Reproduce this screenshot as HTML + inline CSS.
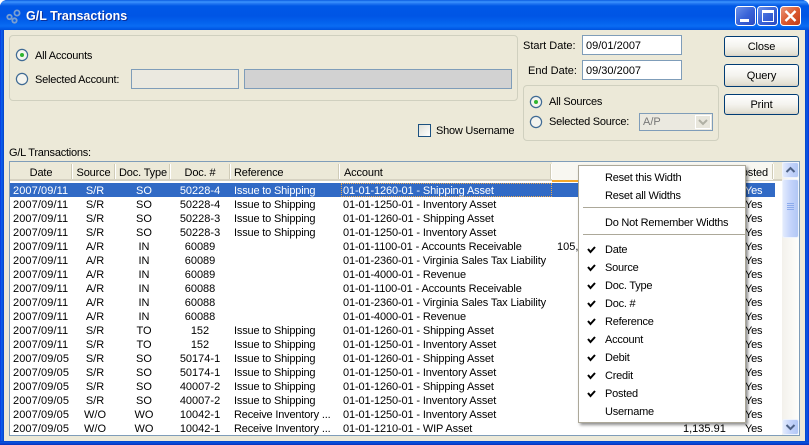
<!DOCTYPE html>
<html><head><meta charset="utf-8"><style>
html,body{margin:0;padding:0;width:809px;height:445px;overflow:hidden;background:#fff}
*{box-sizing:border-box}
body{font:11px/14px "Liberation Sans",sans-serif;color:#000;position:relative}
.a,.a *{position:absolute}
div,span{white-space:nowrap}
#win{left:0;top:0;width:809px;height:445px;background:#0831d9;border-radius:7px 7px 0 0;overflow:hidden}
#title{left:0;top:0;width:809px;height:30px;background:linear-gradient(#0a5be0 0,#3d95ff 2px,#2a7ff5 3px,#0058e6 6px,#0055e5 16px,#0464ee 23px,#0a6cf3 26px,#0058e6 29px,#0052d8 30px)}
#lb{left:0;top:30px;width:4px;height:415px;background:linear-gradient(90deg,#0831d9,#0a5ef0,#0855dd,#0440c8)}
#rb{left:805px;top:30px;width:4px;height:415px;background:linear-gradient(90deg,#0440c8,#0855dd,#0a50e0,#0831d9)}
#bb{left:0;top:441px;width:809px;height:4px;background:linear-gradient(#0440c8,#0855dd,#0840d0,#0831b9)}
#body{left:4px;top:30px;width:801px;height:411px;background:#ece9d8}
.t{line-height:16px;letter-spacing:-.23px}
.grp{border:1px solid #d0d0bf;border-radius:4px}
.in{border:1px solid #7f9db9;background:#fff}
.in span{line-height:16px}
.btn{left:724px;width:75px;border:1px solid #003c74;border-radius:3px;background:linear-gradient(#fff,#f4f3ee 50%,#e3e0d3 90%,#d6d0c5);text-align:center;line-height:21px;letter-spacing:-.1px}
.hd{top:164px;height:15px;width:2px;background:linear-gradient(90deg,#d0ccb8 50%,#fff 50%)}
.h{top:165px;text-align:center;line-height:16px;letter-spacing:-.15px}
.r{left:10px;width:765px;height:14px}
.r span{top:0;line-height:16px}
.c1{left:3px;letter-spacing:.1px}.c2{left:54px;width:62px;text-align:center}.c3{left:109px;width:50px;text-align:center}.c4{left:160px;width:60px;text-align:center}.c5{left:224px;letter-spacing:-.18px}.c6{left:333px;letter-spacing:-.13px}.c8{left:735px;letter-spacing:-.2px}
.sel{background:#316ac5;color:#fff}
.m{left:605px}
.sep{left:583px;width:162px;height:1px;background:#aca899}
</style></head><body>
<div class="a" style="left:0;top:0;width:809px;height:445px">
<div id="win">
<div id="title"></div>
<div id="lb"></div><div id="rb"></div><div id="bb"></div>
<div id="body"></div>
</div>

<svg style="left:5px;top:8px" width="17" height="17" viewBox="0 0 17 17" fill="none" stroke="#7b9fd0" stroke-width="1.8"><circle cx="4.5" cy="9" r="2.2"/><circle cx="12" cy="5" r="2.6"/><circle cx="9.500" cy="12.5" r="2.2"/></svg>
<div style="left:26px;top:8px;font:bold 12.5px/16px 'Liberation Sans',sans-serif;color:#fff;text-shadow:1px 1px 0 #0a2f9a">G/L Transactions</div>

<svg style="left:735px;top:6px" width="66" height="20" viewBox="0 0 66 20">
<defs>
<linearGradient id="bl" x1="0" y1="0" x2="1" y2="1"><stop offset="0" stop-color="#6f94ea"/><stop offset=".5" stop-color="#3a64d8"/><stop offset="1" stop-color="#2a48c0"/></linearGradient>
<linearGradient id="rd" x1="0" y1="0" x2="1" y2="1"><stop offset="0" stop-color="#ea9a80"/><stop offset=".5" stop-color="#dc5a30"/><stop offset="1" stop-color="#c03a18"/></linearGradient>
</defs>
<rect x=".5" y=".5" width="20" height="19" rx="3" fill="url(#bl)" stroke="#fff"/>
<rect x="5" y="13" width="9" height="3" fill="#fff"/>
<rect x="22.5" y=".5" width="20" height="19" rx="3" fill="url(#bl)" stroke="#fff"/>
<path d="M27.5 5.500h11v10h-11zM27.5 4.500h11v2h-11z" fill="none" stroke="#fff"/>
<rect x="45.5" y=".5" width="20" height="19" rx="3" fill="url(#rd)" stroke="#fff"/>
<path d="M50.500 5l10 10M60.500 5l-10 10" stroke="#fff" stroke-width="2.400" fill="none"/>
</svg>

<div class="grp" style="left:9px;top:35px;width:509px;height:66px"></div>
<svg style="left:15px;top:48px" width="14" height="38" viewBox="0 0 14 38"><circle cx="7" cy="7" r="5.6" fill="#f4f4ee" stroke="#3f6a94" stroke-width="1.2"/><circle cx="7" cy="7" r="2" fill="#2fb52f"/><circle cx="7" cy="31" r="5.6" fill="#f4f4ee" stroke="#3f6a94" stroke-width="1.2"/></svg>
<div class="t" style="left:35px;top:48px">All Accounts</div>
<div class="t" style="left:35px;top:72px">Selected Account:</div>
<div class="in" style="left:131px;top:69px;width:108px;height:20px;background:#ebe9e0"></div>
<div class="in" style="left:244px;top:69px;width:268px;height:20px;background:#d2d2d2"></div>

<div class="t" style="left:523px;top:38px;letter-spacing:0">Start Date:</div>
<div class="t" style="left:528px;top:63px;letter-spacing:0">End Date:</div>
<div class="in" style="left:582px;top:35px;width:100px;height:20px"><span style="left:3px;top:2px">09/01/2007</span></div>
<div class="in" style="left:582px;top:60px;width:100px;height:20px"><span style="left:3px;top:2px">09/30/2007</span></div>

<div class="grp" style="left:523px;top:85px;width:196px;height:56px"></div>
<svg style="left:529px;top:95px" width="14" height="34" viewBox="0 0 14 34"><circle cx="7" cy="7" r="5.6" fill="#f4f4ee" stroke="#3f6a94" stroke-width="1.2"/><circle cx="7" cy="7" r="2" fill="#2fb52f"/><circle cx="7" cy="27" r="5.6" fill="#f4f4ee" stroke="#3f6a94" stroke-width="1.2"/></svg>
<div class="t" style="left:549px;top:94px">All Sources</div>
<div class="t" style="left:549px;top:114px">Selected Source:</div>
<div class="in" style="left:639px;top:113px;width:74px;height:18px;background:#ebe9e0;color:#777"><span style="left:3px;top:0">A/P</span>
<svg style="left:55px;top:1px" width="16" height="14" viewBox="0 0 16 14"><rect x=".5" y=".5" width="15" height="13" fill="#e8e6dc" stroke="#fff"/><path d="M4 5l4 4 4-4" fill="none" stroke="#b0b0a4" stroke-width="2"/></svg></div>

<div class="btn" style="top:36px;height:21px">Close</div>
<div class="btn" style="top:64px;height:23px;line-height:23px">Query</div>
<div class="btn" style="top:94px;height:21px">Print</div>

<div style="left:418px;top:124px;width:13px;height:13px;border:1px solid #1c5180;background:linear-gradient(135deg,#e0e0d8,#fff)"></div>
<div class="t" style="left:436px;top:123px">Show Username</div>

<div class="t" style="left:9px;top:145px">G/L Transactions:</div>

<div style="left:9px;top:161px;width:791px;height:275px;border:1px solid #7f9db9;background:#fff"></div>
<div style="left:10px;top:162px;width:772px;height:19px;background:#ece9d8;border-bottom:2px solid #d6d2c2"></div>
<div style="left:552px;top:162px;width:221px;height:18px;background:#f8f7f1"></div>
<div style="left:552px;top:180px;width:30px;height:2px;background:#f3a82c"></div>
<div class="hd" style="left:71px"></div><div class="hd" style="left:114px"></div><div class="hd" style="left:169px"></div><div class="hd" style="left:229px"></div><div class="hd" style="left:338px"></div><div class="hd" style="left:550px"></div><div class="hd" style="left:772px"></div>
<div class="h" style="left:11px;width:60px">Date</div>
<div class="h" style="left:73px;width:41px">Source</div>
<div class="h" style="left:116px;width:54px">Doc. Type</div>
<div class="h" style="left:171px;width:58px">Doc. #</div>
<div class="h" style="left:234px">Reference</div>
<div class="h" style="left:344px">Account</div>
<div class="h" style="left:733px;width:35px;text-align:right">Posted</div>

<div class="r sel" style="top:183px"><span class="c1">2007/09/11</span><span class="c2" style="left:54px">S/R</span><span class="c3">SO</span><span class="c4">50228-4</span><span class="c5">Issue to Shipping</span><span class="c6">01-01-1260-01 - Shipping Asset</span><span class="c8">Yes</span><span style="left:331px;top:0;width:211px;height:14px;border:1px dotted #e8a850"></span></div>
<div class="r" style="top:197px"><span class="c1">2007/09/11</span><span class="c2">S/R</span><span class="c3">SO</span><span class="c4">50228-4</span><span class="c5">Issue to Shipping</span><span class="c6">01-01-1250-01 - Inventory Asset</span><span class="c8">Yes</span></div>
<div class="r" style="top:211px"><span class="c1">2007/09/11</span><span class="c2">S/R</span><span class="c3">SO</span><span class="c4">50228-3</span><span class="c5">Issue to Shipping</span><span class="c6">01-01-1260-01 - Shipping Asset</span><span class="c8">Yes</span></div>
<div class="r" style="top:225px"><span class="c1">2007/09/11</span><span class="c2">S/R</span><span class="c3">SO</span><span class="c4">50228-3</span><span class="c5">Issue to Shipping</span><span class="c6">01-01-1250-01 - Inventory Asset</span><span class="c8">Yes</span></div>
<div class="r" style="top:239px"><span class="c1">2007/09/11</span><span class="c2">A/R</span><span class="c3">IN</span><span class="c4">60089</span><span class="c6">01-01-1100-01 - Accounts Receivable</span><span style="left:547px">105,</span><span class="c8">Yes</span></div>
<div class="r" style="top:253px"><span class="c1">2007/09/11</span><span class="c2">A/R</span><span class="c3">IN</span><span class="c4">60089</span><span class="c6">01-01-2360-01 - Virginia Sales Tax Liability</span><span class="c8">Yes</span></div>
<div class="r" style="top:267px"><span class="c1">2007/09/11</span><span class="c2">A/R</span><span class="c3">IN</span><span class="c4">60089</span><span class="c6">01-01-4000-01 - Revenue</span><span class="c8">Yes</span></div>
<div class="r" style="top:281px"><span class="c1">2007/09/11</span><span class="c2">A/R</span><span class="c3">IN</span><span class="c4">60088</span><span class="c6">01-01-1100-01 - Accounts Receivable</span><span class="c8">Yes</span></div>
<div class="r" style="top:295px"><span class="c1">2007/09/11</span><span class="c2">A/R</span><span class="c3">IN</span><span class="c4">60088</span><span class="c6">01-01-2360-01 - Virginia Sales Tax Liability</span><span class="c8">Yes</span></div>
<div class="r" style="top:309px"><span class="c1">2007/09/11</span><span class="c2">A/R</span><span class="c3">IN</span><span class="c4">60088</span><span class="c6">01-01-4000-01 - Revenue</span><span class="c8">Yes</span></div>
<div class="r" style="top:323px"><span class="c1">2007/09/11</span><span class="c2">S/R</span><span class="c3">TO</span><span class="c4">152</span><span class="c5">Issue to Shipping</span><span class="c6">01-01-1260-01 - Shipping Asset</span><span class="c8">Yes</span></div>
<div class="r" style="top:337px"><span class="c1">2007/09/11</span><span class="c2">S/R</span><span class="c3">TO</span><span class="c4">152</span><span class="c5">Issue to Shipping</span><span class="c6">01-01-1250-01 - Inventory Asset</span><span class="c8">Yes</span></div>
<div class="r" style="top:351px"><span class="c1">2007/09/05</span><span class="c2">S/R</span><span class="c3">SO</span><span class="c4">50174-1</span><span class="c5">Issue to Shipping</span><span class="c6">01-01-1260-01 - Shipping Asset</span><span class="c8">Yes</span></div>
<div class="r" style="top:365px"><span class="c1">2007/09/05</span><span class="c2">S/R</span><span class="c3">SO</span><span class="c4">50174-1</span><span class="c5">Issue to Shipping</span><span class="c6">01-01-1250-01 - Inventory Asset</span><span class="c8">Yes</span></div>
<div class="r" style="top:379px"><span class="c1">2007/09/05</span><span class="c2">S/R</span><span class="c3">SO</span><span class="c4">40007-2</span><span class="c5">Issue to Shipping</span><span class="c6">01-01-1260-01 - Shipping Asset</span><span class="c8">Yes</span></div>
<div class="r" style="top:393px"><span class="c1">2007/09/05</span><span class="c2">S/R</span><span class="c3">SO</span><span class="c4">40007-2</span><span class="c5">Issue to Shipping</span><span class="c6">01-01-1250-01 - Inventory Asset</span><span class="c8">Yes</span></div>
<div class="r" style="top:407px"><span class="c1">2007/09/05</span><span class="c2">W/O</span><span class="c3">WO</span><span class="c4">10042-1</span><span class="c5">Receive Inventory ...</span><span class="c6">01-01-1250-01 - Inventory Asset</span><span class="c8">Yes</span></div>
<div class="r" style="top:421px"><span class="c1">2007/09/05</span><span class="c2">W/O</span><span class="c3">WO</span><span class="c4">10042-1</span><span class="c5">Receive Inventory ...</span><span class="c6">01-01-1210-01 - WIP Asset</span><span style="left:673px">1,135.91</span><span class="c8">Yes</span></div>

<svg style="left:782px;top:162px" width="17" height="273" viewBox="0 0 17 273">
<defs><linearGradient id="sb" x1="0" y1="0" x2="1" y2="0"><stop offset="0" stop-color="#e4ecfc"/><stop offset=".5" stop-color="#c4d4fb"/><stop offset="1" stop-color="#b0c6f4"/></linearGradient>
<linearGradient id="tr" x1="0" y1="0" x2="1" y2="0"><stop offset="0" stop-color="#f3f1ec"/><stop offset="1" stop-color="#fefefb"/></linearGradient></defs>
<rect width="17" height="273" fill="url(#tr)"/>
<rect x=".5" y=".5" width="16" height="15" rx="2" fill="url(#sb)" stroke="#eef3fd"/>
<path d="M4.500 10l4-4 4 4" fill="none" stroke="#4d6185" stroke-width="2"/>
<rect x=".5" y="17.5" width="16" height="58" rx="2" fill="url(#sb)" stroke="#eef3fd"/>
<path d="M5 41.500h7M5 43.500h7M5 45.500h7M5 47.500h7" stroke="#8cabec"/>
<rect x=".5" y="257.5" width="16" height="15" rx="2" fill="url(#sb)" stroke="#eef3fd"/>
<path d="M4.500 263l4 4 4-4" fill="none" stroke="#4d6185" stroke-width="2"/>
</svg>

<div style="left:578px;top:165px;width:168px;height:258px;background:#fff;border:1px solid #aca899;box-shadow:2px 2px 3px rgba(0,0,0,.45)"></div>
<div class="t m" style="top:170px">Reset this Width</div>
<div class="t m" style="top:188px">Reset all Widths</div>
<div class="sep" style="top:207px"></div>
<div class="t m" style="top:215px">Do Not Remember Widths</div>
<div class="sep" style="top:234px"></div>
<div class="t m" style="top:242px">Date</div>
<div class="t m" style="top:260px">Source</div>
<div class="t m" style="top:278px">Doc. Type</div>
<div class="t m" style="top:296px">Doc. #</div>
<div class="t m" style="top:314px">Reference</div>
<div class="t m" style="top:332px">Account</div>
<div class="t m" style="top:350px">Debit</div>
<div class="t m" style="top:368px">Credit</div>
<div class="t m" style="top:386px">Posted</div>
<div class="t m" style="top:404px">Username</div>
<svg style="left:586px;top:241px" width="12" height="160" viewBox="0 0 12 160" fill="none" stroke="#000" stroke-width="2">
<path d="M2 8l2.500 3 4.500-5M2 26l2.500 3 4.500-5M2 44l2.500 3 4.500-5M2 62l2.500 3 4.500-5M2 80l2.500 3 4.500-5M2 98l2.500 3 4.500-5M2 116l2.500 3 4.500-5M2 134l2.500 3 4.500-5M2 152l2.500 3 4.500-5"/>
</svg>
</div>
</body></html>
